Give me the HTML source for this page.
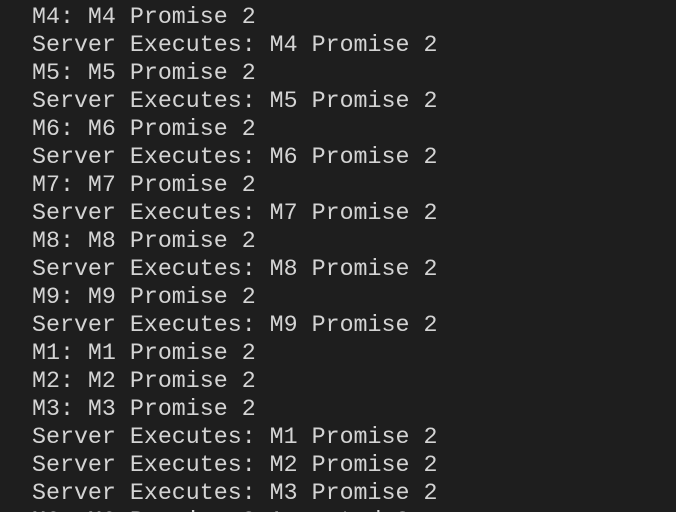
<!DOCTYPE html>
<html><head><style>
html,body{margin:0;padding:0;width:676px;height:512px;overflow:hidden;background:#1e1e1e;}
#c{position:relative;width:676px;height:512px;overflow:hidden;}
pre{margin:0;position:absolute;left:32px;top:-25px;font-family:"Liberation Mono",monospace;font-size:23.3px;line-height:28px;color:#d4d4d4;}
</style></head><body><div id="c">
<pre>                    Accepted
M4: M4 Promise 2
Server Executes: M4 Promise 2
M5: M5 Promise 2
Server Executes: M5 Promise 2
M6: M6 Promise 2
Server Executes: M6 Promise 2
M7: M7 Promise 2
Server Executes: M7 Promise 2
M8: M8 Promise 2
Server Executes: M8 Promise 2
M9: M9 Promise 2
Server Executes: M9 Promise 2
M1: M1 Promise 2
M2: M2 Promise 2
M3: M3 Promise 2
Server Executes: M1 Promise 2
Server Executes: M2 Promise 2
Server Executes: M3 Promise 2
M6: M6 Promise 2 Accepted 2</pre>
</div></body></html>
